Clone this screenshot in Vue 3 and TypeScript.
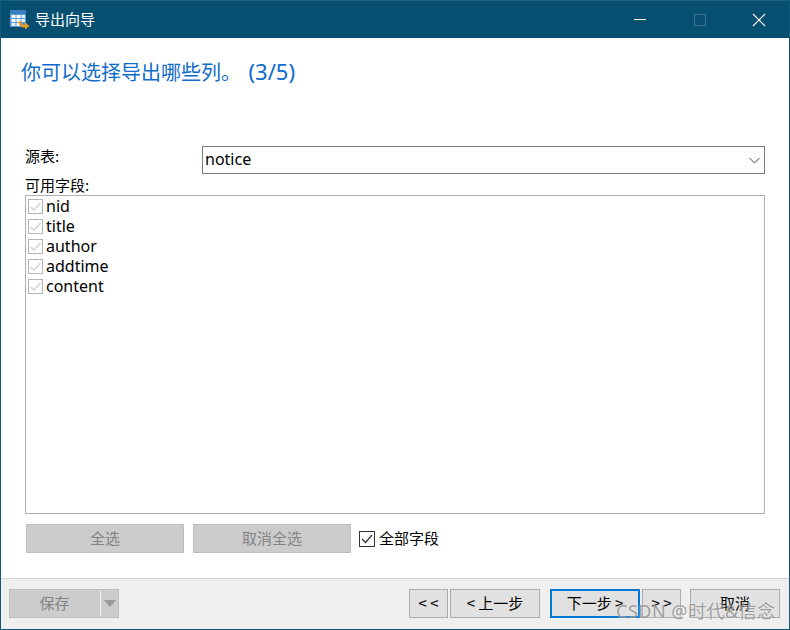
<script setup lang="ts">
const fields = ['nid', 'title', 'author', 'addtime', 'content']
</script>

<template>
  <div class="window">
    <header class="titlebar">
      <svg class="app-icon" width="20" height="20" viewBox="0 0 20 20">
        <rect x="0" y="0" width="16" height="17" rx="1" fill="#5b9bd5" />
        <rect x="0" y="0" width="16" height="4" rx="1" fill="#3a7fc0" />
        <rect x="1.5" y="5" width="4" height="3" fill="#fff" />
        <rect x="6.5" y="5" width="4" height="3" fill="#fff" />
        <rect x="11.5" y="5" width="3.5" height="3" fill="#e4eef8" />
        <rect x="1.5" y="9" width="4" height="3" fill="#fff" />
        <rect x="6.5" y="9" width="4" height="3" fill="#fff" />
        <rect x="11.5" y="9" width="3.5" height="3" fill="#e4eef8" />
        <rect x="1.5" y="13" width="4" height="3" fill="#e4eef8" />
        <rect x="6.5" y="13" width="3" height="3" fill="#fff" />
        <path d="M9 11.5L12 16L16 16" fill="none" stroke="#f09a1a" stroke-width="2.4" />
        <path d="M15 12.5L19.5 16L15 19.5Z" fill="#f09a1a" />
      </svg>
      <span class="window-title">导出向导</span>
      <div class="window-controls">
        <svg width="46" height="38" viewBox="0 0 46 38"><path d="M16 18.5H28" stroke="#fff" /></svg>
        <svg width="46" height="38" viewBox="0 0 46 38"><rect x="17.5" y="13.5" width="11" height="11" fill="none" stroke="#3a7492" /></svg>
        <svg width="46" height="38" viewBox="0 0 46 38"><path d="M17 13L29 25M29 13L17 25" stroke="#fff" stroke-width="1.1" /></svg>
      </div>
    </header>

    <main class="content">
      <h1 class="step-title">你可以选择导出哪些列。 <span class="step-count">(3/5)</span></h1>

      <div class="source-row">
        <label class="source-label">源表:</label>
        <div class="select">
          <span>notice</span>
          <svg width="11" height="7" viewBox="0 0 11 7"><path d="M0.5 1L5.5 6L10.5 1" fill="none" stroke="#444" /></svg>
        </div>
      </div>

      <div class="fields-label">可用字段:</div>
      <ul class="field-list">
        <li v-for="field in fields" :key="field">
          <svg class="check" width="15" height="15" viewBox="0 0 15 15">
            <rect x="0.5" y="0.5" width="14" height="14" fill="#fff" stroke="#b4b4b4" />
            <path d="M2.5 8L6 11L12.5 4" fill="none" stroke="#d2d2d2" stroke-width="1.3" />
          </svg>
          <span>{{ field }}</span>
        </li>
      </ul>

      <div class="select-row">
        <button class="btn disabled wide">全选</button>
        <button class="btn disabled wide">取消全选</button>
        <label class="all-fields">
          <svg width="16" height="16" viewBox="0 0 16 16">
            <rect x="0.5" y="0.5" width="15" height="15" fill="#fff" stroke="#333" />
            <path d="M3 8L6.5 11.5L13 4" fill="none" stroke="#333" stroke-width="1.2" />
          </svg>
          <span>全部字段</span>
        </label>
      </div>
    </main>

    <footer class="footer">
      <div class="save-btn">
        <span class="save-text">保存</span>
        <span class="save-divider"></span>
        <span class="save-arrow"></span>
      </div>
      <div class="nav">
        <button class="btn first">&lt; &lt;</button>
        <button class="btn prev">&lt; 上一步</button>
        <button class="btn next">下一步 &gt;</button>
        <button class="btn last">&gt; &gt;</button>
        <button class="btn cancel">取消</button>
      </div>
    </footer>

    <div class="watermark">CSDN @时代&amp;信念</div>
  </div>
</template>

<style>
html, body {
  margin: 0;
  background: #fff;
}
</style>

<style scoped>
.window {
  position: relative;
  width: 790px;
  height: 630px;
  box-sizing: border-box;
  display: flex;
  flex-direction: column;
  border: 1px solid #0e5878;
  border-top: none;
  background: #fff;
  overflow: hidden;
  font-family: "Noto Sans", "Noto Sans CJK SC", sans-serif;
  font-size: 15px;
  color: #000;
}

.titlebar {
  height: 38px;
  flex: none;
  display: flex;
  align-items: center;
  background: #074f70;
  border-top: 1px solid #1f5f7e;
  box-sizing: border-box;
  padding-left: 9px;
  color: #fff;
}

.app-icon {
  margin-right: 5px;
}

.window-title {
  font-family: "Noto Sans CJK SC", sans-serif;
  font-size: 15px;
  line-height: 20px;
  margin-top: -2px;
}

.window-controls {
  margin-left: auto;
  display: flex;
  margin-right: 7px;
  gap: 13px;
}

.content {
  flex: 1;
  padding: 0 24px;
  display: flex;
  flex-direction: column;
}

.step-title {
  margin: 20px 0 0 -4px;
  height: 28px;
  font-size: 20px;
  line-height: 27px;
  font-weight: 400;
  color: #0d6ccc;
  font-family: "Noto Sans CJK SC", sans-serif;
  white-space: nowrap;
}

.step-count {
  margin-left: 3px;
  font-size: 22px;
  font-family: "Noto Sans", sans-serif;
  font-weight: 400;
}

.source-row {
  margin-top: 60px;
  display: flex;
  height: 28px;
}

.source-label {
  width: 177px;
  line-height: 20px;
  font-family: "Noto Sans CJK SC", sans-serif;
}

.select {
  flex: 1;
  box-sizing: border-box;
  border: 1px solid #7a7a7a;
  display: flex;
  align-items: center;
  justify-content: space-between;
  padding: 0 4px 2px 2px;
  font-size: 16px;
}

.select svg {
  margin-top: 2px;
}

.fields-label {
  height: 21px;
  line-height: 22px;
  font-family: "Noto Sans CJK SC", sans-serif;
}

.field-list {
  list-style: none;
  margin: 0;
  padding: 0 2px;
  height: 319px;
  box-sizing: border-box;
  border: 1px solid #b0b0b0;
}

.field-list li {
  height: 20px;
  display: flex;
  align-items: center;
  gap: 3px;
  font-size: 16px;
}

.field-list .check {
  margin-top: 1px;
}

.select-row {
  margin-top: 10px;
  display: flex;
  align-items: center;
  padding-left: 1px;
}

.btn {
  box-sizing: border-box;
  height: 29px;
  padding: 0 0 2px;
  border: 1px solid #adadad;
  background: #e1e1e1;
  color: #000;
  font-family: "Noto Sans CJK SC", "Noto Sans", sans-serif;
  font-size: 15px;
}

.btn.disabled {
  background: #cccccc;
  border-color: #bfbfbf;
  color: #838383;
}

.btn.wide {
  width: 158px;
  margin-right: 9px;
}

.all-fields {
  display: flex;
  align-items: center;
  gap: 4px;
  margin-left: -1px;
  font-family: "Noto Sans CJK SC", sans-serif;
}

.all-fields span {
  margin-top: -2px;
}

.footer {
  height: 51px;
  flex: none;
  box-sizing: border-box;
  background: #efefef;
  border-top: 1px solid #d5d5d5;
  display: flex;
  justify-content: space-between;
  padding: 10px 9px 0 8px;
}

.save-btn {
  width: 110px;
  height: 29px;
  box-sizing: border-box;
  display: flex;
  align-items: center;
  background: #cccccc;
  border: 1px solid #bfbfbf;
  color: #838383;
  font-family: "Noto Sans CJK SC", sans-serif;
}

.save-text {
  width: 89px;
  text-align: center;
  margin-top: -2px;
}

.save-divider {
  width: 1px;
  height: 25px;
  margin-left: 1px;
  background: #f2f2f2;
}

.save-arrow {
  margin-left: 3px;
  width: 0;
  height: 0;
  border-left: 6px solid transparent;
  border-right: 6px solid transparent;
  border-top: 7px solid #9a9a9a;
}

.nav {
  display: flex;
  word-spacing: 2px;
}

.first, .last {
  width: 39px;
}

.first {
  margin-right: 2px;
}

.prev {
  width: 90px;
  margin-right: 10px;
}

.next {
  width: 90px;
  border: 2px solid #0078d7;
  margin-right: 2px;
}

.last {
  margin-right: 9px;
}

.cancel {
  width: 90px;
}

.watermark {
  position: absolute;
  left: 615px;
  top: 599px;
  font-size: 18px;
  letter-spacing: 0.5px;
  line-height: 24px;
  white-space: nowrap;
  color: rgba(130, 130, 130, 0.75);
  text-shadow: 0 0 2px rgba(255, 255, 255, 0.7);
  font-family: "Noto Sans", "Noto Sans CJK SC", sans-serif;
}
</style>
